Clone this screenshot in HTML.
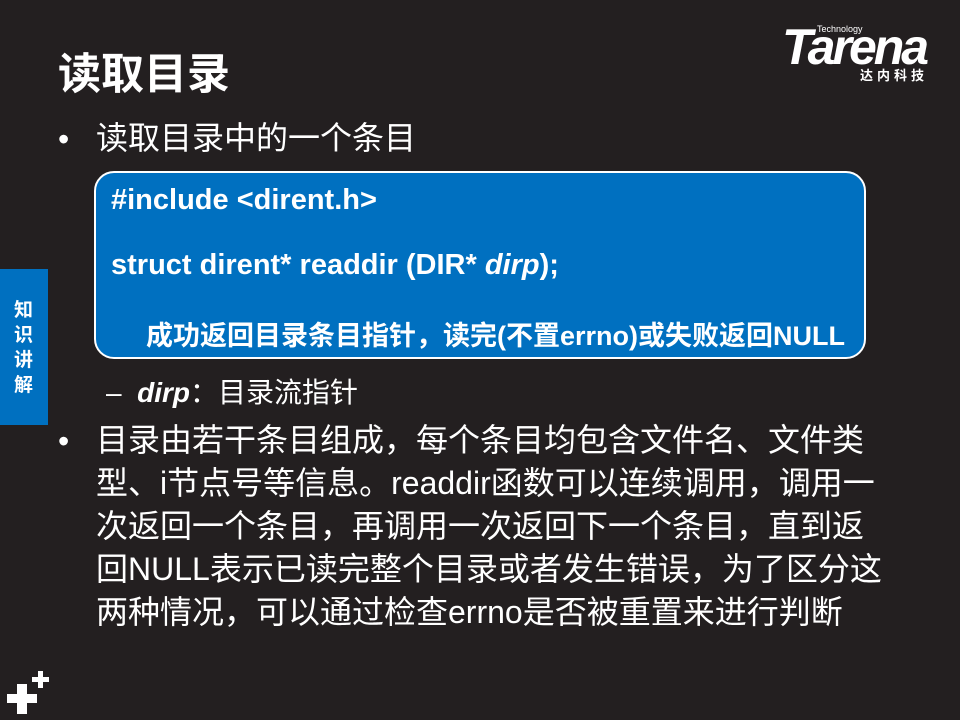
<!DOCTYPE html>
<html><head><meta charset="utf-8"><style>
body{margin:0;width:960px;height:720px;background:#231f20;position:relative;overflow:hidden;font-family:"Liberation Sans","Noto Sans CJK SC",sans-serif;color:#fff}
.a{position:absolute;white-space:nowrap}
.t{left:58px;top:40px;font-size:43px;font-weight:bold}
.b{font-size:32px;line-height:43px}
.box{position:absolute;left:94px;top:171px;width:772px;height:188px;background:#0070c0;border:2px solid #fff;border-radius:20px;box-sizing:border-box}
.c{font-size:27px;font-weight:bold}
</style></head><body>
<div class="a t">读取目录</div>
<div class="a" style="left:782px;top:22px;font-size:50px;font-weight:bold;font-style:italic;letter-spacing:-3px;line-height:50px">Tarena</div>
<div class="a" style="left:817px;top:24px;font-size:9px">Technology</div>
<div class="a" style="left:860px;top:65px;font-size:13px;font-weight:bold;letter-spacing:4px">达内科技</div>
<div class="a" style="left:0;top:269px;width:48px;height:156px;background:#0070c0"></div>
<div class="a" style="left:14px;top:298px;font-size:19px;font-weight:bold;line-height:25px;white-space:normal;width:20px">知识讲解</div>
<div class="a b" style="left:58px;top:118px">•</div>
<div class="a b" style="left:96px;top:117px">读取目录中的一个条目</div>
<div class="box"></div>
<div class="a c" style="left:111px;top:184px;font-size:29px">#include &lt;dirent.h&gt;</div>
<div class="a c" style="left:111px;top:249px;font-size:29px">struct dirent* readdir (DIR* <i>dirp</i>);</div>
<div class="a c" style="left:146px;top:314px">成功返回目录条目指针，读完(不置errno)或失败返回NULL</div>
<div class="a" style="left:106px;top:371px;font-size:28px">–&nbsp; <b><i>dirp</i></b>：目录流指针</div>
<div class="a b" style="left:58px;top:420px">•</div>
<div class="a b" style="left:96px;top:419px;white-space:normal;width:820px">目录由若干条目组成，每个条目均包含文件名、文件类<br>型、i节点号等信息。readdir函数可以连续调用，调用一<br>次返回一个条目，再调用一次返回下一个条目，直到返<br>回NULL表示已读完整个目录或者发生错误，为了区分这<br>两种情况，可以通过检查errno是否被重置来进行判断</div>
<div class="a" style="left:7px;top:694px;width:30px;height:9px;background:#fff"></div>
<div class="a" style="left:17px;top:684px;width:10px;height:30px;background:#fff"></div>
<div class="a" style="left:32px;top:677px;width:17px;height:5px;background:#fff"></div>
<div class="a" style="left:38px;top:671px;width:5px;height:17px;background:#fff"></div>
</body></html>
